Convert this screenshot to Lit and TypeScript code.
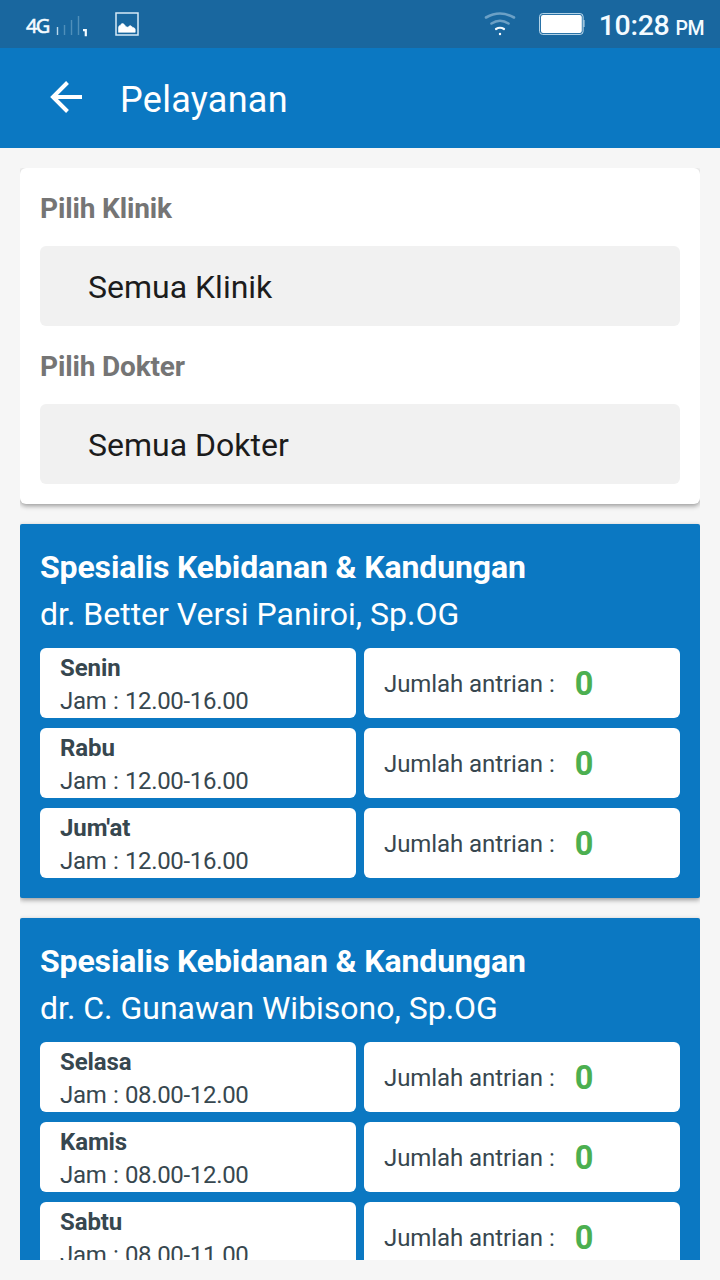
import { LitElement, html, css } from "lit";
import { customElement, property } from "lit/decorators.js";

interface Slot {
  day: string;
  hours: string;
  queue: number;
}

interface Schedule {
  clinic: string;
  doctor: string;
  slots: Slot[];
}

const schedules: Schedule[] = [
  {
    clinic: "Spesialis Kebidanan & Kandungan",
    doctor: "dr. Better Versi Paniroi, Sp.OG",
    slots: [
      { day: "Senin", hours: "12.00-16.00", queue: 0 },
      { day: "Rabu", hours: "12.00-16.00", queue: 0 },
      { day: "Jum'at", hours: "12.00-16.00", queue: 0 },
    ],
  },
  {
    clinic: "Spesialis Kebidanan & Kandungan",
    doctor: "dr. C. Gunawan Wibisono, Sp.OG",
    slots: [
      { day: "Selasa", hours: "08.00-12.00", queue: 0 },
      { day: "Kamis", hours: "08.00-12.00", queue: 0 },
      { day: "Sabtu", hours: "08.00-11.00", queue: 0 },
    ],
  },
];

@customElement("status-bar")
class StatusBar extends LitElement {
  static styles = css`
    :host {
      display: flex;
      align-items: center;
      box-sizing: border-box;
      height: 48px;
      padding: 0 16px 0 26px;
      background: #19679f;
      color: #f4fbff;
    }
    svg { display: block; flex: none; }
    .net { font: 400 20px/24px "Noto Sans", sans-serif; letter-spacing: -1.6px; width: 29px; padding-top: 4px; -webkit-text-stroke: 0.5px #f4fbff; }
    .bars { margin-top: 4px; }
    .picture { margin-left: 25px; }
    .space { flex: 1; }
    .battery { margin-left: 23px; }
    .time { font: 500 28.5px/34px Roboto, sans-serif; letter-spacing: -0.3px; margin-left: 14px; padding-top: 6px; white-space: nowrap; }
    .pm { font-size: 19.5px; margin-left: 6px; letter-spacing: -0.5px; }
  `;

  render() {
    return html`
      <span class="net">4G</span>
      <svg class="bars" width="35" height="24" viewBox="0 0 35 24">
        <path d="M2.500 13v8" stroke="#b9d8ec" stroke-width="1.400" />
        <path d="M9.500 11v10M16.500 6v15M23.500 2v19" stroke="#4f8fba" stroke-width="1.400" />
        <path d="M28 16.200h2.800v6" fill="none" stroke="#f4fbff" stroke-width="2.200" />
      </svg>
      <svg class="picture" width="24" height="24" viewBox="0 0 24 24">
        <rect x="1" y="1" width="22" height="22" fill="none" stroke="#d5eaf8" stroke-width="1.500" />
        <path d="M3.500 20.300v-5q.5-2 2-2l1-1.500q1.500-.8 3 1l1.500 2 2 .5 1.500-1.500 1.500 0 1.500 1.500q2.500.5 2.700 2v3z" fill="#fff" stroke="#fff" stroke-width=".6" stroke-linejoin="round" />
      </svg>
      <span class="space"></span>
      <svg width="32" height="24" viewBox="0 0 32 24" fill="none" stroke-linecap="round">
        <path d="M2 5.500q14-8 28 0" stroke="#6ba0c6" stroke-width="2.600" />
        <path d="M7.500 11.500q8.500-5.500 17 0" stroke="#6ba0c6" stroke-width="2.600" />
        <path d="M12 17q4-2.500 8 0" stroke="#f4fbff" stroke-width="2.200" />
        <circle cx="16" cy="22" r="1.200" fill="#fff" />
      </svg>
      <svg class="battery" width="46" height="22" viewBox="0 0 46 22">
        <rect x=".6" y=".6" width="43.500" height="20.800" rx="3" fill="none" stroke="#c3deef" stroke-width="1" />
        <rect x="2" y="2" width="40.800" height="18" rx="2" fill="#fff" />
        <path d="M45 7v7" stroke="#c3deef" stroke-width="1" />
      </svg>
      <span class="time">10:28<span class="pm">PM</span></span>
    `;
  }
}

@customElement("schedule-card")
class ScheduleCard extends LitElement {
  @property({ attribute: false }) schedule!: Schedule;

  static styles = css`
    :host {
      display: block;
      flex: none;
      padding: 20px;
      background: #0b78c2;
      border-radius: 2px;
      box-shadow: 0 2px 5px rgba(0, 0, 0, 0.38);
      color: #fff;
    }
    .clinic, .doctor { font-size: 32px; line-height: 47px; white-space: nowrap; }
    .clinic { font-weight: 700; letter-spacing: -0.13px; }
    .doctor { letter-spacing: -0.01px; }
    .slots { display: grid; gap: 10px; margin-top: 10px; }
    .slot { display: grid; grid-template-columns: 1fr 1fr; gap: 8px; }
    .cell {
      box-sizing: border-box;
      height: 70px;
      padding: 4px 20px 0;
      border-radius: 6px;
      background: #fff;
      color: #37474f;
      font-size: 24px;
      line-height: 33px;
    }
    .day { font-weight: 700; letter-spacing: -0.1px; }
    .hours { letter-spacing: -0.33px; word-spacing: 0.9px; }
    .queue { display: flex; align-items: center; padding-top: 2px; letter-spacing: -0.07px; }
    .count { margin: 1px 0 0 20px; font-size: 32.5px; font-weight: 700; color: #4caf50; }
  `;

  render() {
    return html`
      <div class="clinic">${this.schedule.clinic}</div>
      <div class="doctor">${this.schedule.doctor}</div>
      <div class="slots">
        ${this.schedule.slots.map(
          (s) => html`
            <div class="slot">
              <div class="cell">
                <div class="day">${s.day}</div>
                <div class="hours">Jam : ${s.hours}</div>
              </div>
              <div class="cell queue">
                <span>Jumlah antrian :</span><span class="count">${s.queue}</span>
              </div>
            </div>
          `
        )}
      </div>
    `;
  }
}

@customElement("app-root")
class AppRoot extends LitElement {
  static styles = css`
    :host {
      display: flex;
      flex-direction: column;
      height: 1280px;
      overflow: hidden;
      background: #f6f6f6;
      font-family: Roboto, sans-serif;
    }
    status-bar { flex: none; }
    .toolbar {
      display: flex;
      align-items: center;
      flex: none;
      height: 100px;
      padding-left: 50px;
      background: #0b78c2;
      color: #fff;
    }
    .toolbar svg { display: block; margin-top: -2px; }
    .heading { margin: 3px 0 0 37px; font-size: 36px; font-weight: 400; line-height: 44px; letter-spacing: 0.28px; }
    .list {
      display: flex;
      flex-direction: column;
      gap: 20px;
      flex: 1;
      min-height: 0;
      margin: 20px;
      overflow: hidden;
    }
    .filters {
      flex: none;
      padding: 20px;
      border-radius: 6px;
      background: #fff;
      box-shadow: 0 2px 5px rgba(0, 0, 0, 0.38);
    }
    .label { font-size: 28px; font-weight: 700; line-height: 41px; margin-bottom: 17px; color: #757575; letter-spacing: -0.15px; }
    .select {
      height: 80px;
      padding: 1px 48px 0;
      box-sizing: border-box;
      border-radius: 6px;
      background: #f1f1f1;
      color: #1c1c1c;
      font-size: 32px;
      line-height: 80px;
    }
    .select + .label { margin-top: 20px; }
  `;

  render() {
    return html`
      <status-bar></status-bar>
      <header class="toolbar">
        <svg width="33" height="32" viewBox="0 0 33 32" fill="none" stroke="#fff" stroke-width="4">
          <path d="M32 16H3M17.500 1.500L3 16l14.500 14.500" />
        </svg>
        <h1 class="heading">Pelayanan</h1>
      </header>
      <main class="list">
        <section class="filters">
          <div class="label">Pilih Klinik</div>
          <div class="select">Semua Klinik</div>
          <div class="label">Pilih Dokter</div>
          <div class="select">Semua Dokter</div>
        </section>
        ${schedules.map((s) => html`<schedule-card .schedule=${s}></schedule-card>`)}
      </main>
    `;
  }
}
